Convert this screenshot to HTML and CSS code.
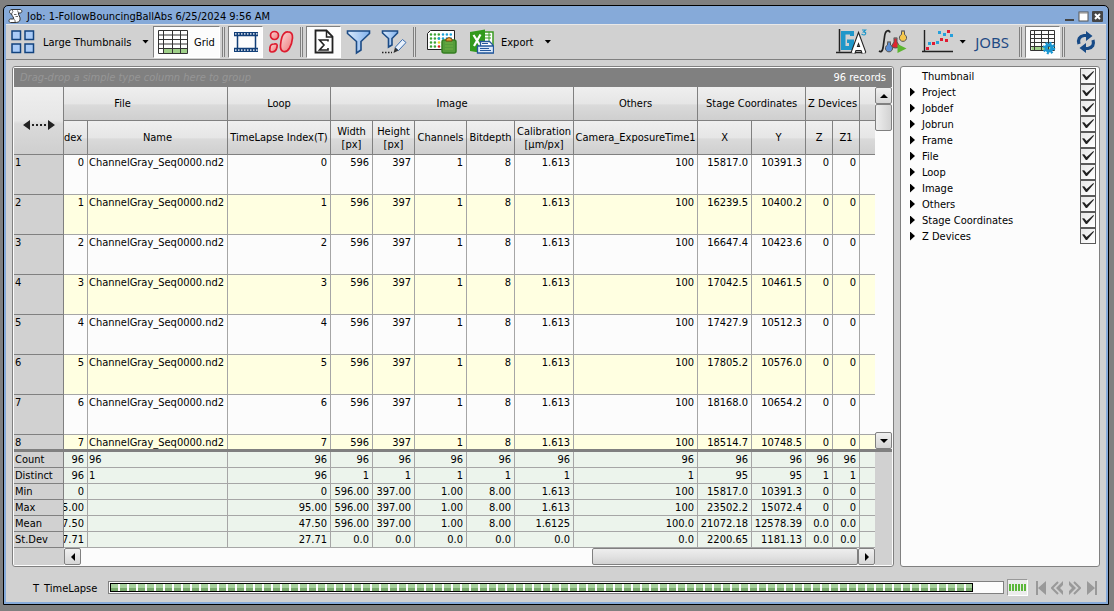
FILE: index.html
```html
<!DOCTYPE html>
<html lang="en">
<head>
<meta charset="utf-8">
<title>Job: 1-FollowBouncingBallAbs</title>
<link rel="stylesheet" href="styles.css">
</head>
<body>
<div class="window">
  <header class="titlebar">
    <svg class="title-icon" width="15" height="16" viewBox="0 0 15 16"><path d="M3.500 6C.5 5.500 1 1.500 4 1.500H12C14.500 1.500 14.500 5 12 5H10.500C9.500 6.500 13 9 12 12C11.500 14 9.500 14.500 7 14.500H2.500C.5 14.500.5 11 2.500 11H5.500C6.500 10 4 8 3.500 6Z" fill="#fff" stroke="#333"/><path d="M4 1.500Q6 3 3.500 6M10.500 5 9.500 2.500M5.500 11Q8 12 7 14.500M6 6.500H8.500M7.500 8.500H10" fill="none" stroke="#444" stroke-width=".8"/></svg>
    <h1>Job: 1-FollowBouncingBallAbs 6/25/2024 9:56 AM</h1>
    <button class="win-btn" aria-label="Minimize"><svg width="11" height="11"><path d="M1 8h9v2H1z" fill="#444"/></svg></button>
    <button class="win-btn" aria-label="Maximize"><svg width="11" height="11"><rect x="1" y="1" width="9" height="9" fill="#fff" stroke="#555"/><path d="M1 2h9" stroke="#888"/></svg></button>
    <button class="win-btn" aria-label="Close"><svg width="11" height="11"><rect width="11" height="11" rx="1" fill="#444"/><path d="M3 3l5 5M8 3l-5 5" stroke="#fff" stroke-width="2"/></svg></button>
  </header>

  <nav class="toolbar">
    <button class="tool thumbs">
      <svg width="24" height="24" viewBox="0 0 24 24"><g fill="#a9cbf7" stroke="#12437f" stroke-width="1.500"><rect x="1" y="1" width="8.500" height="8.500"/><rect x="14" y="1" width="8.500" height="8.500"/><rect x="1" y="14" width="8.500" height="8.500"/><rect x="14" y="14" width="8.500" height="8.500"/></g></svg>
      <span class="grow">Large Thumbnails</span><span class="caret"></span>
    </button>
    <button class="tool pressed grid-btn" aria-pressed="true">
      <svg width="30" height="24" viewBox="0 0 30 24"><path d="M.5.500h29v23H.5z" fill="#fff"/><path d="M5.500 18.500h24v5h-24z" fill="#9fd089"/><path d="M.5.500h29v23H.5zM.5 5h29M.5 9.500h29M.5 14h29M.5 18.500h29M5.500.500v23M14.500.500v23M22.500.500v23" fill="none" stroke="#333"/></svg>
      <span>Grid</span>
    </button>
    <i class="sep"></i>
    <button class="tool pressed sq" aria-label="Frames" aria-pressed="true">
      <svg width="26" height="22" viewBox="0 0 26 22"><path d="M1 1h24v4H1zM1 17h24v4H1z" fill="#123f78"/><path d="M2 3h23M2 19h23" stroke="#fff" stroke-width="1.500" stroke-dasharray="1.500 1.500"/><path d="M4.500 5v12M22.500 5v12M1 4.500h24M1 17.500h24" stroke="#123f78" stroke-width="1.500"/></svg>
    </button>
    <button class="tool sq" aria-label="Objects">
      <svg width="26" height="24" viewBox="0 0 26 24"><defs><linearGradient id="red" x1="0" x2="1" y2="1"><stop stop-color="#fbdcdc"/><stop offset="1" stop-color="#e77"/></linearGradient></defs><g fill="url(#red)" stroke="#dd1c2f" stroke-width="1.700"><circle cx="6.500" cy="5.500" r="4"/><path d="M2 18Q2 14 6 14Q10 13 9 17Q8 22 4 22Q1 22 2 18Z"/><path d="M14 7Q16 1.500 20 1.800Q25 2 24.500 8Q24 14 21.500 18Q19 22.500 15.500 21.500Q12 20.500 12.500 15Q13 10 14 7Z"/></g></svg>
    </button>
    <i class="sep"></i>
    <button class="tool pressed sq" aria-label="Statistics" aria-pressed="true">
      <svg width="20" height="26" viewBox="0 0 20 26"><path d="M1.500 1.500h11l6 6v16h-17z" fill="#fff" stroke="#222" stroke-width="1.800"/><path d="M12.500 2v6h6" fill="none" stroke="#222" stroke-width="1.500"/><path d="M14 12.500V11H5.500l4.500 5-4.500 5H14v-2" fill="none" stroke="#222" stroke-width="1.600"/></svg>
    </button>
    <button class="tool sq" aria-label="Filter">
      <svg width="26" height="26" viewBox="0 0 26 26"><defs><linearGradient id="blue" x2="1"><stop stop-color="#dcebfc"/><stop offset="1" stop-color="#7fb0ec"/></linearGradient></defs><path d="M1.500 2h22v2.500l-8.500 8V21l-4.500 3V12.500l-9-8z" fill="url(#blue)" stroke="#1c4b85" stroke-width="1.600"/></svg>
    </button>
    <button class="tool sq" aria-label="Edit filter">
      <svg width="26" height="26" viewBox="0 0 26 26"><path d="M1.500 2h15v2l-5.500 5.500V16l-3.500 2V9.500L1.500 4z" fill="url(#blue)" stroke="#1c4b85" stroke-width="1.600"/><path d="M14 18.500 21.500 10.500l3.500 3-7.500 8z" fill="#e8f1fc" stroke="#3a6cae"/><path d="M14 18.500l3.500 3-5 2.500z" fill="#333"/><path d="M1 23.500h10" stroke="#222" stroke-width="1.500" stroke-dasharray="1.500 1.500"/></svg>
    </button>
    <i class="sep"></i>
    <button class="tool plate" aria-label="Copy plate">
      <svg width="30" height="24" viewBox="0 0 30 24"><path d="M3.500.500h24v19H.5v-16z" fill="#fff" stroke="#222"/><g stroke-width="2.600" stroke-dasharray="0 3.900" stroke-linecap="round"><path d="M4 4.500h10M4 8.500h10M4 12.500h7M4 16.500h7" stroke="#3da535"/><path d="M16 4.500h11M16 8.500h11M12 8.500h1" stroke="#18a0d8"/><path d="M12 12.500h2" stroke="#e9d21e"/><path d="M12 16.500h2" stroke="#e02020"/></g><rect x="15" y="10" width="14" height="13" rx="2" fill="#559c3b" stroke="#347e22" stroke-width="1.500"/><path d="M18 13h8M18 16h8M18 19h8" stroke="#72ae45"/><path d="M19 11V9q3-3 6 0v2z" fill="#f1a33a" stroke="#7c4a10"/></svg>
    </button>
    <button class="tool export">
      <svg width="25" height="25" viewBox="0 0 25 25"><path d="M14 3h10v19H14z" fill="#fff" stroke="#3a9a20" stroke-width="1.500"/><path d="M16 6h6M16 9h6M20 3v10" stroke="#3a9a20"/><path d="M1 3 16 .5v24L1 22z" fill="#329a1c"/><path d="M4.500 6l7 11M11.500 5.500 5 17" stroke="#fff" stroke-width="2.200"/><path d="M11.500 12.500h9l3 3v8h-12z" fill="#fff" stroke="#24589c" stroke-width="1.300"/><path d="M8.500 17h16v7h-16z" fill="#dbe9fa" stroke="#24589c" stroke-width="1.300"/><path d="M11 19.500h9M11 21.500h11M13 14.500h6" stroke="#24589c"/></svg>
      <span>Export</span><span class="caret"></span>
    </button>
    <span class="grow"></span>
    <button class="tool" aria-label="General analysis">
      <svg width="32" height="26" viewBox="0 0 32 26"><path d="M5 2h13v5h-4V5.500H9.500V17H13v-3h-2v-3.500h7V21H5z" fill="#1f97c9"/><path d="M3.500 0v22.500M0 23.500h30" stroke="#222" stroke-width="1.500"/><path d="M17 24 22.500 9l5.500 15M19 19.500h7" fill="none" stroke="#222" stroke-width="5"/><path d="M17 24 22.500 9l5.500 15M19 19.500h7" fill="none" stroke="#fff" stroke-width="2.800"/><path d="M26 1h3.500L27.500 3q3 0 2 2t-4 0" fill="none" stroke="#1f97c9" stroke-width="1.200"/></svg>
    </button>
    <button class="tool" aria-label="Run analysis">
      <svg width="30" height="26" viewBox="0 0 30 26"><path d="M12 3.500Q11 1 9 2T6.500 8L5 19q-1 5-4 3" fill="none" stroke="#222" stroke-width="1.700"/><g stroke="#555"><path d="M16 9h3v4l2.500 4q0 2-4 2t-4-2L16 13z" fill="#df2430"/><path d="M9.500 13h3v3a3.600 3.600 0 1 1-3 0z" fill="#5a8ed5"/><path d="M23.500 2h3v3.500a3.600 3.600 0 1 1-3 0z" fill="#f4c74d"/></g><path d="M9 13h4M15.500 9h4M23 2h4" stroke="#777"/><path d="M19.500 15v9l9-4.500z" fill="#5cb531"/></svg>
    </button>
    <button class="tool scatter" aria-label="Charts">
      <svg width="32" height="26" viewBox="0 0 32 26"><path d="M2.500 1v22M0 22.500h31" fill="none" stroke="#222" stroke-width="1.400"/><g fill="#e11c33"><path d="M4 18h3v3H4zM10 13h3v3h-3zM18 9h3v3h-3zM23 10h3v3h-3zM25 1h3v3h-3z"/></g><g fill="#25a0dc"><path d="M6 13h3v3H6zM14 12h3v3h-3zM16 2h3v3h-3zM21 4h3v3h-3zM28 5h3v3h-3z"/></g></svg>
      <span class="caret"></span>
    </button>
    <button class="tool jobs">JOBS</button>
    <i class="sep"></i>
    <button class="tool pressed sq" aria-label="Grid settings" aria-pressed="true">
      <svg width="26" height="26" viewBox="0 0 26 26"><path d="M1.500 17.500h22v4h-22z" fill="#9fd089"/><path d="M.5 1.500h24v20H.5zM.5 5.500h24M.5 9.500h24M.5 13.500h24M.5 17.500h24M4.500 1.500v20M11.500 1.500v20M18.500 1.500v20" fill="none" stroke="#333"/><circle cx="19" cy="19" r="5" fill="none" stroke="#1896d2" stroke-width="2.500" stroke-dasharray="2 1.900"/><circle cx="19" cy="19" r="3" fill="none" stroke="#1896d2" stroke-width="3.200"/></svg>
    </button>
    <i class="sep"></i>
    <button class="tool sq" aria-label="Refresh">
      <svg width="20" height="24" viewBox="0 0 20 24"><path d="M3 14Q1 7 8 5.500H12M17 10Q19 17 12 18.500H8" fill="none" stroke="#174a86" stroke-width="3.200"/><path d="M10 1l6.500 5L10 11zM10 13v10l-6.500-5z" fill="#174a86"/></svg>
    </button>
  </nav>

  <main class="main">
    <section class="panel grid-panel">
      <div class="groupbar"><em>Drag-drop a simple type column here to group</em><span>96 records</span></div>
      <div class="viewport">
        <div class="rows">
          <table>
            <colgroup><col class="w50"><col class="w24"><col class="w140"><col class="w103"><col class="w42"><col class="w42"><col class="w52"><col class="w48"><col class="w59"><col class="w124"><col class="w54"><col class="w54"><col class="w27"><col class="w27"><col></colgroup>
            <thead>
              <tr><th rowspan="2" class="corner"><svg width="32" height="10" viewBox="0 0 32 10"><path d="M0 5 7 0v10zM32 5l-7-5v10z" fill="#222"/><path d="M9 5h14" stroke="#222" stroke-width="2" stroke-dasharray="2"/></svg></th><th colspan="2" class="file">File</th><th>Loop</th><th colspan="5">Image</th><th>Others</th><th colspan="2">Stage Coordinates</th><th colspan="2">Z Devices</th><th></th></tr>
              <tr><th><div class="clip">Index</div></th><th>Name</th><th>TimeLapse Index(T)</th><th>Width<br>[px]</th><th>Height<br>[px]</th><th>Channels</th><th>Bitdepth</th><th>Calibration<br>[µm/px]</th><th>Camera_ExposureTime1</th><th>X</th><th>Y</th><th>Z</th><th>Z1</th><th></th></tr>
            </thead>
            <tbody>
              <tr><th>1</th><td>0</td><td>ChannelGray_Seq0000.nd2</td><td>0</td><td>596</td><td>397</td><td>1</td><td>8</td><td>1.613</td><td>100</td><td>15817.0</td><td>10391.3</td><td>0</td><td>0</td><td></td></tr>
              <tr><th>2</th><td>1</td><td>ChannelGray_Seq0000.nd2</td><td>1</td><td>596</td><td>397</td><td>1</td><td>8</td><td>1.613</td><td>100</td><td>16239.5</td><td>10400.2</td><td>0</td><td>0</td><td></td></tr>
              <tr><th>3</th><td>2</td><td>ChannelGray_Seq0000.nd2</td><td>2</td><td>596</td><td>397</td><td>1</td><td>8</td><td>1.613</td><td>100</td><td>16647.4</td><td>10423.6</td><td>0</td><td>0</td><td></td></tr>
              <tr><th>4</th><td>3</td><td>ChannelGray_Seq0000.nd2</td><td>3</td><td>596</td><td>397</td><td>1</td><td>8</td><td>1.613</td><td>100</td><td>17042.5</td><td>10461.5</td><td>0</td><td>0</td><td></td></tr>
              <tr><th>5</th><td>4</td><td>ChannelGray_Seq0000.nd2</td><td>4</td><td>596</td><td>397</td><td>1</td><td>8</td><td>1.613</td><td>100</td><td>17427.9</td><td>10512.3</td><td>0</td><td>0</td><td></td></tr>
              <tr><th>6</th><td>5</td><td>ChannelGray_Seq0000.nd2</td><td>5</td><td>596</td><td>397</td><td>1</td><td>8</td><td>1.613</td><td>100</td><td>17805.2</td><td>10576.0</td><td>0</td><td>0</td><td></td></tr>
              <tr><th>7</th><td>6</td><td>ChannelGray_Seq0000.nd2</td><td>6</td><td>596</td><td>397</td><td>1</td><td>8</td><td>1.613</td><td>100</td><td>18168.0</td><td>10654.2</td><td>0</td><td>0</td><td></td></tr>
              <tr><th>8</th><td>7</td><td>ChannelGray_Seq0000.nd2</td><td>7</td><td>596</td><td>397</td><td>1</td><td>8</td><td>1.613</td><td>100</td><td>18514.7</td><td>10748.5</td><td>0</td><td>0</td><td></td></tr>
            </tbody>
          </table>
        </div>
        <div class="vscroll">
          <button aria-label="Scroll up"><svg width="8" height="4"><path d="M0 4 4 0l4 4z"/></svg></button>
          <div class="vthumb"></div>
          <div class="grow"></div>
          <button aria-label="Scroll down"><svg width="8" height="4"><path d="M0 0h8L4 4z"/></svg></button>
        </div>
      </div>
      <div class="summary">
        <table>
          <colgroup><col class="w50"><col class="w24"><col class="w140"><col class="w103"><col class="w42"><col class="w42"><col class="w52"><col class="w48"><col class="w59"><col class="w124"><col class="w54"><col class="w54"><col class="w27"><col class="w27"><col></colgroup>
          <tbody>
            <tr><th>Count</th><td>96</td><td>96</td><td>96</td><td>96</td><td>96</td><td>96</td><td>96</td><td>96</td><td>96</td><td>96</td><td>96</td><td>96</td><td>96</td><td></td></tr>
            <tr><th>Distinct</th><td>96</td><td>1</td><td>96</td><td>1</td><td>1</td><td>1</td><td>1</td><td>1</td><td>1</td><td>95</td><td>95</td><td>1</td><td>1</td><td></td></tr>
            <tr><th>Min</th><td>0</td><td></td><td>0</td><td>596.00</td><td>397.00</td><td>1.00</td><td>8.00</td><td>1.613</td><td>100</td><td>15817.0</td><td>10391.3</td><td>0</td><td>0</td><td></td></tr>
            <tr><th>Max</th><td><div class="clip">95.00</div></td><td></td><td>95.00</td><td>596.00</td><td>397.00</td><td>1.00</td><td>8.00</td><td>1.613</td><td>100</td><td>23502.2</td><td>15072.4</td><td>0</td><td>0</td><td></td></tr>
            <tr><th>Mean</th><td><div class="clip">47.50</div></td><td></td><td>47.50</td><td>596.00</td><td>397.00</td><td>1.00</td><td>8.00</td><td>1.6125</td><td>100.0</td><td>21072.18</td><td>12578.39</td><td>0.0</td><td>0.0</td><td></td></tr>
            <tr><th>St.Dev</th><td><div class="clip">27.71</div></td><td></td><td>27.71</td><td>0.0</td><td>0.0</td><td>0.0</td><td>0.0</td><td>0.0</td><td>0.0</td><td>2200.65</td><td>1181.13</td><td>0.0</td><td>0.0</td><td></td></tr>
          </tbody>
        </table>
      </div>
      <div class="hscroll">
        <button aria-label="Scroll left"><svg width="4" height="8"><path d="M4 0v8L0 4z"/></svg></button>
        <div class="htrack"></div>
        <div class="hthumb"></div>
        <button aria-label="Scroll right"><svg width="4" height="8"><path d="M0 0v8l4-4z"/></svg></button>
      </div>
    </section>

    <aside class="panel side">
      <ul>
        <li><span class="exp"></span><label for="c0">Thumbnail</label><input type="checkbox" id="c0" checked></li>
        <li><button class="exp" aria-label="Expand Project"></button><label for="c1">Project</label><input type="checkbox" id="c1" checked></li>
        <li><button class="exp" aria-label="Expand Jobdef"></button><label for="c2">Jobdef</label><input type="checkbox" id="c2" checked></li>
        <li><button class="exp" aria-label="Expand Jobrun"></button><label for="c3">Jobrun</label><input type="checkbox" id="c3" checked></li>
        <li><button class="exp" aria-label="Expand Frame"></button><label for="c4">Frame</label><input type="checkbox" id="c4" checked></li>
        <li><button class="exp" aria-label="Expand File"></button><label for="c5">File</label><input type="checkbox" id="c5" checked></li>
        <li><button class="exp" aria-label="Expand Loop"></button><label for="c6">Loop</label><input type="checkbox" id="c6" checked></li>
        <li><button class="exp" aria-label="Expand Image"></button><label for="c7">Image</label><input type="checkbox" id="c7" checked></li>
        <li><button class="exp" aria-label="Expand Others"></button><label for="c8">Others</label><input type="checkbox" id="c8" checked></li>
        <li><button class="exp" aria-label="Expand Stage Coordinates"></button><label for="c9">Stage Coordinates</label><input type="checkbox" id="c9" checked></li>
        <li><button class="exp" aria-label="Expand Z Devices"></button><label for="c10">Z Devices</label><input type="checkbox" id="c10" checked></li>
      </ul>
    </aside>
  </main>

  <footer class="timeline">
    <span class="axis">T</span><span class="axis-name">TimeLapse</span>
    <div class="progress" role="progressbar" aria-label="TimeLapse" aria-valuenow="96"><div class="fill" style="width:96.700%"></div></div>
    <button class="loop" aria-label="All frames"><svg width="17" height="7"><path d="M0 3.500h17" stroke="#5cb83a" stroke-width="7" stroke-dasharray="2 1"/></svg></button>
    <button class="nav" aria-label="First"><svg width="12" height="14"><path d="M1 0h2v14H1zM11 0v14L3 7z"/></svg></button>
    <button class="nav" aria-label="Previous"><svg width="13" height="14"><path d="M7 1 1 7l6 6" fill="none" stroke="#999" stroke-width="2"/><path d="M12 0v4L9 7l3 3v4L5 7z"/></svg></button>
    <button class="nav" aria-label="Next"><svg width="13" height="14"><path d="M6 1l6 6-6 6" fill="none" stroke="#999" stroke-width="2"/><path d="M1 0v4l3 3-3 3v4l7-7z"/></svg></button>
    <button class="nav" aria-label="Last"><svg width="12" height="14"><path d="M9 0h2v14H9zM1 0v14l8-7z"/></svg></button>
  </footer>
</div>
</body>
</html>
```

FILE: styles.css
```css
* { box-sizing: border-box; }
body {
  margin: 0;
  background: #808080;
  font-family: "DejaVu Sans Condensed", "Noto Sans", sans-serif;
  font-size: 11px;
  line-height: 14px;
  color: #000;
}
button {
  margin: 0;
  padding: 0;
  border: 0;
  background: none;
  font: inherit;
  color: inherit;
  display: flex;
  align-items: center;
  justify-content: center;
}
svg { display: block; flex: none; }
.grow { flex: 1; }

.window {
  display: flex;
  flex-direction: column;
  height: calc(100vh - 11px);
  margin: 5px 5px 6px 3px;
  border: 1px solid #000;
  border-radius: 5px 5px 0 0;
  background: #86aad9;
  padding: 0 2px 2px;
}
.titlebar {
  display: flex;
  align-items: center;
  gap: 3px;
  height: 18px;
  padding: 2px 3px 0 2px;
}
.titlebar h1 { flex: 1; margin: 0 0 0 1px; padding-top: 2px; font-size: 11px; font-weight: normal; }

.toolbar {
  display: flex;
  align-items: center;
  height: 36px;
  padding: 0 3px 1px 4px;
  background: #d1d1d1;
  border-top: 1px solid #e8e8e8;
  border-bottom: 1px solid #808080;
}
.tool { height: 32px; padding: 0 5px; }
.tool span:not(.caret) { padding-top: 2px; }
.sq { width: 35px; padding: 0; }
.pressed {
  background: #fcfcfc;
  border: 1px solid #fff;
  border-top-color: #808080;
  border-left-color: #808080;
}
.sep {
  width: 3px;
  height: 30px;
  margin: 0 3px 0 2px;
  border-left: 1px solid #808080;
  border-right: 1px solid #808080;
  background: #dcdcdc;
}
.caret {
  width: 7px;
  height: 4px;
  background: #000;
  clip-path: polygon(0 0, 100% 0, 50% 100%);
}
.thumbs { width: 143px; padding: 0 4px 0 1px; gap: 8px; text-align: left; }
.grid-btn { width: 67px; gap: 6px; padding: 0; }
.plate { padding: 0 5px 0 8px; }
.export { gap: 7px; padding: 0 7px; }
.export .caret { margin-left: 4px; }
.scatter { gap: 5px; padding: 0 3px 0 9px; }
.jobs {
  padding: 0 8px 0 6px;
  font-family: "Noto Sans", "Open Sans", sans-serif;
  font-size: 15px;
  color: #1f4a84;
}

.main {
  flex: 1;
  min-height: 0;
  display: flex;
  gap: 6px;
  padding: 6px 6px 0;
  background: #d1d1d1;
}
.panel {
  border: 1px solid #808080;
  border-radius: 3px;
  background: #fcfcfc;
  padding: 1px;
}
.grid-panel { flex: 1; min-width: 0; display: flex; flex-direction: column; }
.side { width: 200px; }

.groupbar {
  display: flex;
  justify-content: space-between;
  align-items: center;
  height: 19px;
  padding: 0 6px;
  background: #808080;
  color: #fff;
}
.groupbar em { color: #969696; }

.viewport { flex: 1; min-height: 0; display: flex; border-bottom: 3px solid #808080; }
.rows { flex: 1; min-width: 0; overflow: hidden; }

table { width: 100%; table-layout: fixed; border-collapse: separate; border-spacing: 0; }
.w24 { width: 24px; }
.w27 { width: 27px; }
.w42 { width: 42px; }
.w48 { width: 48px; }
.w50 { width: 50px; }
.w52 { width: 52px; }
.w54 { width: 54px; }
.w59 { width: 59px; }
.w103 { width: 103px; }
.w124 { width: 124px; }
.w140 { width: 140px; }
th, td {
  padding: 0;
  font-weight: normal;
  white-space: nowrap;
  border-right: 1px solid #a6a6a6;
  border-bottom: 1px solid #a6a6a6;
}
th:last-child, td:last-child { border-right: 0; }
thead th {
  height: 34px;
  line-height: 13px;
  border-color: #808080;
  background: linear-gradient(#efefef, #e6e6e6 50%, #dadada 55%, #cfcfcf);
}
thead .file { padding-right: 46px; }
thead .clip { padding-right: 5px; }
.corner svg { margin: 8px auto 0; }
tbody td { height: 40px; vertical-align: top; padding: 1px 3px 0 1px; text-align: right; }
tbody td:nth-child(3) { text-align: left; }
tbody th { padding: 1px 1px 0; vertical-align: top; text-align: left; background: #d1d1d1; border-color: #808080; }
.rows tbody tr:nth-child(even) td { background: #ffffe1; }
.clip { display: flex; justify-content: flex-end; overflow: hidden; }
tbody td:nth-child(2) { padding-left: 0; }

.summary { padding-right: 17px; background: #d1d1d1; }
.summary td { height: 16px; background: #ecf4ec; }

.vscroll { display: flex; flex-direction: column; width: 17px; }
.vscroll button, .hscroll button {
  width: 17px;
  height: 17px;
  border: 1px solid #808080;
  border-radius: 2px;
  background: linear-gradient(#f0f0f0, #d6d6d6);
}
.vthumb {
  height: 27px;
  border: 1px solid #808080;
  border-radius: 2px;
  background: linear-gradient(90deg, #eee, #e0e0e0 50%, #d2d2d2);
}
.hscroll {
  display: flex;
  padding: 0 17px 0 50px;
  background: linear-gradient(90deg, #d1d1d1 50px, #fcfcfc 50px, #fcfcfc calc(100% - 17px), #d1d1d1 calc(100% - 17px));
}
.htrack { flex: 512; }
.hthumb {
  flex: 265;
  border: 1px solid #808080;
  border-radius: 2px;
  background: linear-gradient(#eee, #e2e2e2 50%, #d2d2d2);
}

.side ul { margin: 0; padding: 0 2px 0 8px; list-style: none; }
.side li { display: flex; align-items: center; height: 16px; }
.side label { flex: 1; padding-top: 2px; }
.exp { flex: none; width: 12px; height: 10px; justify-content: flex-start; }
button.exp::before {
  content: "";
  width: 5px;
  height: 9px;
  background: #000;
  clip-path: polygon(0 0, 100% 50%, 0 100%);
}
.side input {
  appearance: none;
  margin: 0;
  width: 16px;
  height: 16px;
  border: 1px solid #5a5a5a;
  background: linear-gradient(135deg, #e8e8e8, #fff);
}
.side input:checked::before {
  content: "";
  display: block;
  width: 12px;
  height: 9px;
  margin: 2px 1px;
  background: #222;
  clip-path: polygon(0 40%, 18% 35%, 38% 68%, 95% 0, 100% 8%, 42% 100%, 32% 100%);
}

.timeline {
  display: flex;
  align-items: center;
  height: 35px;
  padding: 6px 6px 0 27px;
  background: #d1d1d1;
}
.axis { margin-right: 5px; }
.axis-name { width: 64px; }
.axis, .axis-name { padding-top: 2px; }
.progress {
  flex: 1;
  height: 13px;
  padding: 1px;
  border: 1px solid #808080;
  background: #fcfcfc;
}
.fill {
  height: 9px;
  border: 1px solid #000;
  background:
    repeating-linear-gradient(90deg, transparent 0 7px, #fcfcfc 7px 9px),
    linear-gradient(#a6d09c 50%, #78a96b 50%);
}
.loop {
  width: 21px;
  height: 17px;
  margin: 0 4px 0 3px;
  border: 1px solid #fff;
  border-top-color: #999;
  border-left-color: #999;
  background: #ececec;
}
.nav { width: 17px; }
.nav svg { fill: #999; }
```
